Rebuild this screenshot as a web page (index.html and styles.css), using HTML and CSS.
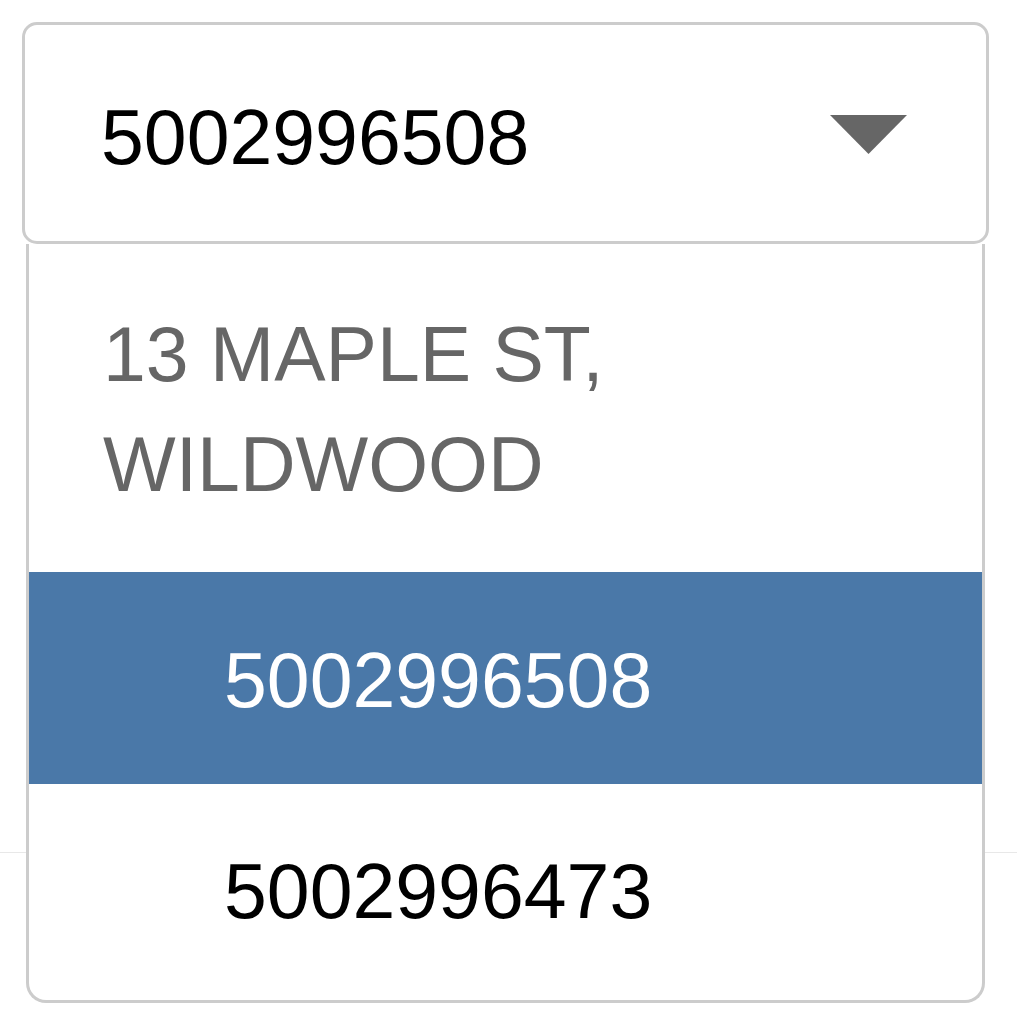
FILE: index.html
```html
<!DOCTYPE html>
<html>
<head>
<meta charset="utf-8">
<link rel="stylesheet" href="styles.css">
</head>
<body>
<div class="page-divider"></div>
<div class="select">
  <div class="select-box">
    <span class="select-value">5002996508</span>
    <svg class="select-arrow" width="77" height="39" viewBox="0 0 77 39"><path d="M0 0 H77 L38.5 39 Z" fill="#666"/></svg>
  </div>
  <div class="select-list">
    <div class="group-label">13 MAPLE ST,<br>WILDWOOD</div>
    <div class="option option-selected">5002996508</div>
    <div class="option">5002996473</div>
  </div>
</div>
</body>
</html>
```
FILE: styles.css
```css
html, body {
  margin: 0;
  padding: 0;
  background: #fff;
}
body {
  position: relative;
  width: 1017px;
  height: 1027px;
  overflow: hidden;
  font-family: "Liberation Sans", Arial, Helvetica, sans-serif;
  font-size: 77px;
}
.page-divider {
  position: absolute;
  left: 0;
  right: 0;
  top: 852px;
  height: 1px;
  background: #e8e8e8;
}
.select {
  position: relative;
  padding: 22px 0 0 22px;
}
.select-box {
  box-sizing: border-box;
  width: 967px;
  height: 222px;
  border: 3px solid #cccccc;
  border-radius: 15px;
  background: #fff;
  display: flex;
  justify-content: space-between;
  align-items: flex-start;
  padding: 68px 79px 0 76px;
  line-height: 88px;
  color: #000;
}
.select-arrow {
  display: block;
  margin-top: 22px;
}
.select-list {
  position: relative;
  box-sizing: border-box;
  margin-left: 4px;
  width: 959px;
  border: 3px solid #cccccc;
  border-top: none;
  border-radius: 0 0 20px 20px;
  background: #fff;
}
.group-label {
  color: #666;
  line-height: 110px;
  padding: 55px 0 53px 74px;
}
.option {
  line-height: 88px;
  padding: 63px 0 65px 195px;
  color: #000;
}
.option-selected {
  background: #4a78a8;
  color: #fff;
  padding: 64px 0 60px 195px;
}
```
